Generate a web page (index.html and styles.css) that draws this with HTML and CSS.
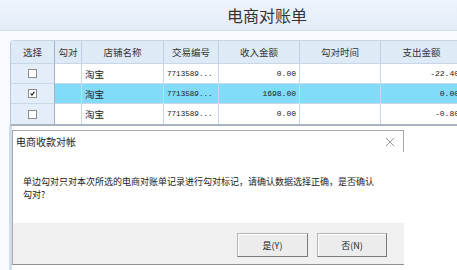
FILE: index.html
```html
<!DOCTYPE html>
<html>
<head>
<meta charset="utf-8">
<link rel="stylesheet" href="styles.css">
</head>
<body>
<div class="page">
  <div class="titlebar">电商对账单</div>
  <div class="content">
    <table class="grid">
      <colgroup>
        <col style="width:44px"><col style="width:27px"><col style="width:82px"><col style="width:55px"><col style="width:81px"><col style="width:81px"><col style="width:82px">
      </colgroup>
      <thead>
        <tr><th>选择</th><th>勾对</th><th>店铺名称</th><th>交易编号</th><th>收入金额</th><th>勾对时间</th><th>支出金额</th></tr>
      </thead>
      <tbody>
        <tr>
          <td class="sel"><span class="cb"></span></td><td></td><td class="txt">淘宝</td><td class="code">7713589...</td><td class="num">0.00</td><td></td><td class="num">-22.40</td>
        </tr>
        <tr class="hi">
          <td class="sel"><span class="cb"><svg viewBox="0 0 9 9" width="9" height="9"><path d="M2 4.5 L3.8 6.5 L7 2.2" fill="none" stroke="#111" stroke-width="1.4"/></svg></span></td><td></td><td class="txt">淘宝</td><td class="code">7713589...</td><td class="num">1698.00</td><td></td><td class="num">0.00</td>
        </tr>
        <tr>
          <td class="sel"><span class="cb"></span></td><td></td><td class="txt">淘宝</td><td class="code">7713589...</td><td class="num">0.00</td><td></td><td class="num">-0.80</td>
        </tr>
      </tbody>
    </table>
    <div class="filler"></div>
  </div>

  <div class="dialog">
    <div class="dlg-title">
      <span>电商收款对帐</span>
      <svg class="close" viewBox="0 0 10 10" width="10" height="10"><path d="M1 1 L9 9 M9 1 L1 9" stroke="#8a8a8a" stroke-width="0.9" fill="none"/></svg>
    </div>
    <div class="dlg-body">
      <p class="msg">单边勾对只对本次所选的电商对账单记录进行勾对标记，请确认数据选择正确，是否确认<br>勾对?</p>
    </div>
    <div class="dlg-foot">
      <button class="btn yes">是(Y)</button>
      <button class="btn no">否(N)</button>
    </div>
  </div>
</div>
</body>
</html>
```
FILE: styles.css
```css
* { box-sizing: border-box; }
html, body { margin: 0; padding: 0; }
body {
  width: 457px;
  height: 270px;
  overflow: hidden;
  background: #fff;
  font-family: "Noto Sans CJK SC", "Noto Sans", sans-serif;
  color: #222;
}
.page {
  position: relative;
  width: 457px;
  height: 270px;
  display: flex;
  flex-direction: column;
}
.titlebar {
  height: 31px;
  flex: none;
  background: linear-gradient(#eef4fc, #e2ecf8);
  border-bottom: 1px solid #d3deeb;
  font-size: 16px;
  line-height: 30px;
  color: #333;
  padding-left: 227px;
}
.content {
  flex: 1;
  display: flex;
  flex-direction: column;
  background: #f7fafe;
  padding-top: 9px;
  padding-left: 10px;
  overflow: hidden;
}
.grid {
  border-collapse: separate;
  border-spacing: 0;
  table-layout: fixed;
  width: 452px;
  flex: none;
  border-left: 1px solid #b8c8dc;
  border-top: 1px solid #c6d4e6;
  border-bottom: 2px solid #a9b3bf;
  border-top-left-radius: 4px;
  background: #fff;
  font-size: 9.5px;
  line-height: 12px;
}
.grid th {
  height: 23px;
  background: #dfeaf7;
  font-weight: normal;
  font-size: 9.5px;
  line-height: 12px;
  color: #333;
  text-align: center;
  border-right: 1px solid #c0d0e4;
  border-bottom: 1px solid #c8d6e8;
  padding: 0;
  white-space: nowrap;
}
.grid th:first-child { border-right: 1px solid #9fb2c8; border-top-left-radius: 4px; }
.grid td {
  height: 20px;
  padding: 0 3px;
  font-size: 9.5px;
  line-height: 12px;
  border-right: 1px solid #c8d8ea;
  border-bottom: 1px solid #c8d8ea;
  white-space: nowrap;
  overflow: hidden;
  vertical-align: middle;
}
.grid tbody tr:last-child td { border-bottom: none; }
.grid td.sel {
  background: #e4eefa;
  text-align: center;
  border-right: 1px solid #9fb2c8;
  line-height: 0;
}
.grid tr.hi td { background: #80dcf9; }
.grid tr.hi td.sel { background: #e4eefa; }
.cb {
  display: inline-flex;
  width: 9px;
  height: 9px;
  border: 1px solid #8c8c8c;
  background: #fff;
  vertical-align: middle;
  align-items: center;
  justify-content: center;
}
.cb svg { display: block; }
.txt { color: #222; }
.grid td.code {
  font-family: "Liberation Mono", monospace;
  font-size: 7.6px;
  color: #222;
}
.grid td.num {
  font-family: "Liberation Mono", monospace;
  font-size: 8px;
  text-align: right;
  color: #222;
}
.filler {
  flex: 1;
  margin-left: -10px;
  background: linear-gradient(to right, #f7fafe 9px, #cfdcec 9px, #cfdcec 12px, #fff 12px);
}

.dialog {
  position: absolute;
  left: 12px;
  top: 130px;
  width: 392px;
  height: 135px;
  display: flex;
  flex-direction: column;
  border-left: 1px solid #a9a9a9;
  border-bottom: 1px solid #8f8f8f;
}
.dlg-title {
  height: 22px;
  flex: none;
  background: #fff;
  border-top: 1px solid #a9a9a9;
  border-right: 1px solid #a9a9a9;
  display: flex;
  align-items: center;
  justify-content: space-between;
  padding: 0 8px 0 3px;
  font-size: 10px;
  color: #222;
}
.close { display: block; }
.dlg-body {
  height: 71px;
  flex: none;
  background: #fff;
  padding: 23px 10px 0 10px;
}
.msg {
  margin: 0;
  font-size: 9px;
  line-height: 13px;
  color: #222;
}
.dlg-foot {
  flex: 1;
  background: #f0f0f0;
  display: flex;
  justify-content: flex-end;
  align-items: flex-start;
  gap: 9px;
  padding: 10px 17px 0 0;
}
.btn {
  height: 24px;
  margin: 0;
  padding: 0;
  font-family: "Noto Sans CJK SC", "Noto Sans", sans-serif;
  font-size: 9px;
  color: #222;
  background: #ececec;
  border: 1px solid #b5b5b5;
  border-right-color: #7a7a7a;
  border-bottom-color: #7a7a7a;
  box-shadow: inset 1px 1px 0 #fff;
}
.yes { width: 71px; }
.no { width: 70px; }
```
